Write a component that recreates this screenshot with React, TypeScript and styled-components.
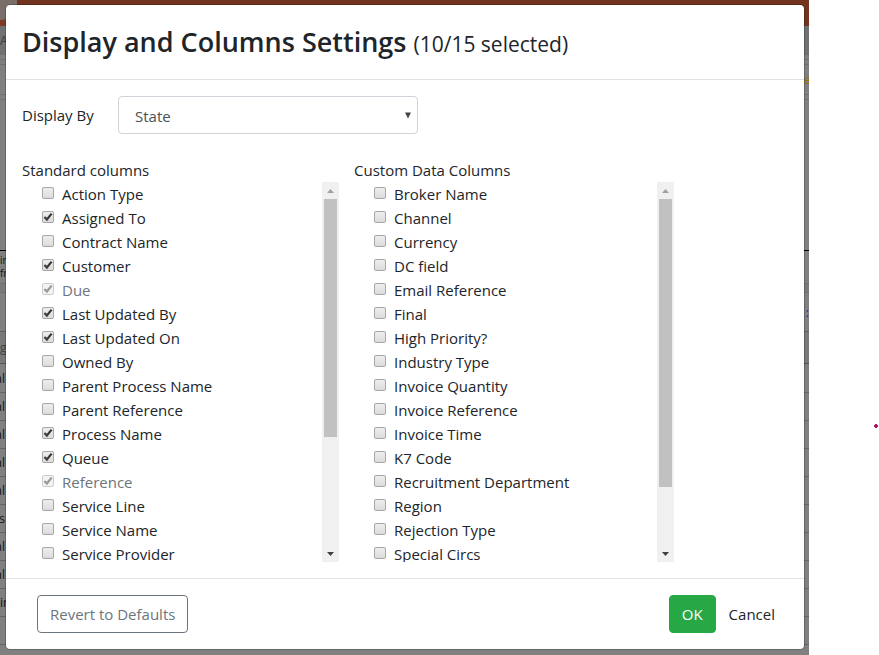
import React, { useState } from "react";
import styled, { createGlobalStyle } from "styled-components";

const GlobalStyle = createGlobalStyle`
  *, *::before, *::after { box-sizing: border-box; }
  html, body, #root { height: 100%; }
  body {
    margin: 0;
    background: #fff;
    color: #212529;
    font-family: "Segoe UI", "Open Sans", "Noto Sans", sans-serif;
    font-size: 15px;
    line-height: 24px;
  }
  button, input, select { font: inherit; color: inherit; }
`;

const Page = styled.div`
  display: flex;
  min-height: 100%;
`;

const AppArea = styled.div`
  position: relative;
  flex: 1;
  display: flex;
  flex-direction: column;
  background: #808080;
  overflow: hidden;
`;

const Gutter = styled.aside`
  display: flex;
  align-items: flex-start;
  justify-content: flex-end;
  width: 70px;
  padding: 424px 1px 0 0;
`;

const Banner = styled.div`
  height: 26px;
  background: #723421;
`;

const BackRow = styled.div<{ $h: number; $line?: string; $bg?: string; $tone?: string }>`
  display: flex;
  align-items: center;
  justify-content: space-between;
  height: ${(p) => p.$h}px;
  flex: none;
  background: ${(p) => p.$bg ?? "transparent"};
  border-bottom: ${(p) => (p.$line ? `1px solid ${p.$line}` : "0")};
  color: ${(p) => p.$tone ?? "#111"};
  font-size: 12px;
  line-height: 13px;
`;

const Sliver = styled.span<{ $end?: boolean; $size?: number }>`
  display: flex;
  flex-direction: column;
  align-items: ${(p) => (p.$end ? "flex-end" : "flex-start")};
  width: 5px;
  font-size: ${(p) => p.$size ?? 12}px;
`;

const Dialog = styled.form`
  position: absolute;
  top: 5px;
  left: 6px;
  right: 5px;
  display: flex;
  flex-direction: column;
  background: #fff;
  border-radius: 4px;
  box-shadow: 0 0 0 1px rgba(0, 0, 0, 0.2);
`;

const Header = styled.header`
  padding: 18px 16px 16px;
  border-bottom: 1px solid #dee2e6;
`;

const Title = styled.h2`
  margin: 0;
  font-size: 27px;
  font-weight: 600;
  line-height: 38px;
`;

const Count = styled.small`
  font-size: 21px;
  font-weight: 400;
`;

const Body = styled.div`
  padding: 16px;
`;

const Field = styled.div`
  display: flex;
  align-items: center;
  margin-bottom: 24px;
`;

const FieldLabel = styled.label`
  width: 96px;
`;

const SelectBox = styled.div`
  position: relative;
  width: 300px;
  svg {
    position: absolute;
    right: 7px;
    top: 16px;
    pointer-events: none;
  }
`;

const Select = styled.select`
  appearance: none;
  display: block;
  width: 100%;
  height: 38px;
  padding: 2px 16px 0;
  border: 1px solid #ced4da;
  border-radius: 4px;
  background: #fff;
  color: #495057;
`;

const Columns = styled.div`
  display: grid;
  grid-template-columns: 317px 320px;
  gap: 15px;
`;

const Group = styled.fieldset`
  min-width: 0;
  margin: 0;
  padding: 0;
  border: 0;
`;

const Legend = styled.legend`
  display: block;
  padding: 0;
  height: 24px;
`;

const ListFrame = styled.div`
  display: flex;
  height: 380px;
`;

const List = styled.ul`
  flex: 1;
  margin: 0;
  padding: 0 0 0 20px;
  list-style: none;
  overflow-y: auto;
  scrollbar-width: none;
`;

const Option = styled.label<{ $muted?: boolean }>`
  display: flex;
  align-items: flex-start;
  gap: 8px;
  height: 24px;
  color: ${(p) => (p.$muted ? "#6c757d" : "inherit")};
`;

const CheckHolder = styled.span`
  position: relative;
  width: 12px;
  height: 12px;
  margin-top: 5px;
  svg {
    position: absolute;
    left: 0;
    top: 0;
    pointer-events: none;
  }
`;

const Checkbox = styled.input`
  appearance: none;
  display: block;
  width: 12px;
  height: 12px;
  margin: 0;
  border: 1px solid #a6a6a6;
  border-radius: 2px;
  background: linear-gradient(#eeeeee, #dcdcdc);
  &:disabled {
    border-color: #cecece;
    background: #f3f3f3;
  }
`;

const Bar = styled.div`
  display: flex;
  flex-direction: column;
  width: 17px;
  background: #f0f0f0;
`;

const BarButton = styled.button`
  display: grid;
  place-items: center;
  height: 17px;
  padding: 0;
  border: 0;
  background: none;
`;

const Track = styled.div`
  flex: 1;
  padding: 0 2px;
`;

const Thumb = styled.div<{ $h: number }>`
  height: ${(p) => p.$h}px;
  background: #c1c1c1;
`;

const Footer = styled.footer`
  display: flex;
  align-items: center;
  padding: 16px 16px 16px 31px;
  border-top: 1px solid #dee2e6;
`;

const Button = styled.button<{ $kind: "outline" | "primary" | "plain" }>`
  height: 38px;
  padding: 0 12px;
  border-radius: 4px;
  border: 1px solid
    ${(p) => ({ outline: "#6c757d", primary: "#28a745", plain: "transparent" })[p.$kind]};
  background: ${(p) => (p.$kind === "primary" ? "#28a745" : "transparent")};
  color: ${(p) => ({ outline: "#6c757d", primary: "#fff", plain: "#212529" })[p.$kind]};
`;

const Spacer = styled.span`
  flex: 1;
`;

type Item = { name: string; checked?: boolean; locked?: boolean };

const standard: Item[] = [
  { name: "Action Type" },
  { name: "Assigned To", checked: true },
  { name: "Contract Name" },
  { name: "Customer", checked: true },
  { name: "Due", checked: true, locked: true },
  { name: "Last Updated By", checked: true },
  { name: "Last Updated On", checked: true },
  { name: "Owned By" },
  { name: "Parent Process Name" },
  { name: "Parent Reference" },
  { name: "Process Name", checked: true },
  { name: "Queue", checked: true },
  { name: "Reference", checked: true, locked: true },
  { name: "Service Line" },
  { name: "Service Name" },
  { name: "Service Provider" },
];

const custom: Item[] = [
  "Broker Name",
  "Channel",
  "Currency",
  "DC field",
  "Email Reference",
  "Final",
  "High Priority?",
  "Industry Type",
  "Invoice Quantity",
  "Invoice Reference",
  "Invoice Time",
  "K7 Code",
  "Recruitment Department",
  "Region",
  "Rejection Type",
  "Special Circs",
].map((name) => ({ name }));

function OptionRow({ item }: { item: Item }) {
  const [checked, setChecked] = useState(!!item.checked);
  return (
    <li>
      <Option $muted={item.locked}>
        <CheckHolder>
          <Checkbox
            type="checkbox"
            checked={checked}
            disabled={item.locked}
            onChange={(e) => setChecked(e.target.checked)}
          />
          {checked && (
            <svg width="12" height="12" viewBox="0 0 12 12" aria-hidden="true">
              <path
                d="M2.4 6 L4.9 8.5 L9.6 2.6"
                fill="none"
                stroke={item.locked ? "#999" : "#3c3c3c"}
                strokeWidth="2.3"
              />
            </svg>
          )}
        </CheckHolder>
        {item.name}
      </Option>
    </li>
  );
}

function ColumnGroup({ title, items, thumb }: { title: string; items: Item[]; thumb: number }) {
  return (
    <Group>
      <Legend>{title}</Legend>
      <ListFrame>
        <List>
          {items.map((item) => (
            <OptionRow key={item.name} item={item} />
          ))}
        </List>
        <Bar>
          <BarButton type="button" aria-label={`Scroll ${title} up`}>
            <svg width="7" height="4" viewBox="0 0 7 4">
              <path d="M0 4 L3.5 0 L7 4 Z" fill="#a0a0a0" />
            </svg>
          </BarButton>
          <Track>
            <Thumb $h={thumb} />
          </Track>
          <BarButton type="button" aria-label={`Scroll ${title} down`}>
            <svg width="7" height="4" viewBox="0 0 7 4">
              <path d="M0 0 L3.5 4 L7 0 Z" fill="#404040" />
            </svg>
          </BarButton>
        </Bar>
      </ListFrame>
    </Group>
  );
}

const backgroundRows = ["al", "al", "al", "al", "al", "es", "al", "al", "in", ""];

function BackgroundPage() {
  return (
    <div aria-hidden="true">
      <Banner>
        <svg width="17" height="26" viewBox="0 0 17 26">
          <rect width="17" height="26" fill="#7b6d69" />
          <path d="M0 20 C8 20 12 17 17 13 V26 H0 Z" fill="#7f3a25" />
        </svg>
      </Banner>
      <BackRow $h={29} $bg="#707172" $tone="#3f3f3f">
        <Sliver>A</Sliver>
      </BackRow>
      <BackRow $h={5} $line="#6f6f6f" />
      <BackRow $h={5} $line="#6f6f6f" />
      <BackRow $h={30} $line="#6f6f6f" $tone="#9a6f00">
        <Sliver />
        <Sliver>e</Sliver>
      </BackRow>
      <BackRow $h={5} $line="#6f6f6f" />
      <BackRow $h={151} $line="#000" />
      <BackRow $h={33} $line="#6f6f6f">
        <Sliver $size={10}>
          <span>in</span>
          <span>fr</span>
        </Sliver>
      </BackRow>
      <BackRow $h={9} $bg="#787a7c" $line="#6f6f6f" />
      <BackRow $h={39} $line="#5f5f5f" $tone="#22229a">
        <Sliver />
        <Sliver $end>:</Sliver>
      </BackRow>
      <BackRow $h={32} $line="#555" $bg="#797979" $tone="#444">
        <Sliver>gr</Sliver>
      </BackRow>
      {backgroundRows.map((text, i) => (
        <BackRow key={i} $h={i === 0 ? 29 : 28} $line="#646464">
          <Sliver $end={text !== "in"}>{text}</Sliver>
        </BackRow>
      ))}
    </div>
  );
}

export default function App() {
  return (
    <>
      <GlobalStyle />
      <Page>
        <AppArea>
          <BackgroundPage />
          <Dialog
            role="dialog"
            aria-labelledby="dialog-title"
            onSubmit={(e) => e.preventDefault()}
          >
            <Header>
              <Title id="dialog-title">
                Display and Columns Settings <Count>(10/15 selected)</Count>
              </Title>
            </Header>
            <Body>
              <Field>
                <FieldLabel htmlFor="display-by">Display By</FieldLabel>
                <SelectBox>
                  <Select id="display-by" defaultValue="State">
                    <option>State</option>
                  </Select>
                  <svg width="6" height="7" viewBox="0 0 6 7" aria-hidden="true">
                    <path d="M0 0.5 H6 L3 6.5 Z" fill="#40464c" />
                  </svg>
                </SelectBox>
              </Field>
              <Columns>
                <ColumnGroup title="Standard columns" items={standard} thumb={238} />
                <ColumnGroup title="Custom Data Columns" items={custom} thumb={288} />
              </Columns>
            </Body>
            <Footer>
              <Button type="button" $kind="outline">
                Revert to Defaults
              </Button>
              <Spacer />
              <Button type="submit" $kind="primary">
                OK
              </Button>
              <Button type="button" $kind="plain">
                Cancel
              </Button>
            </Footer>
          </Dialog>
        </AppArea>
        <Gutter>
          <svg width="4" height="4" viewBox="0 0 4 4" aria-hidden="true">
            <path d="M1 0 H3 V1 H4 V3 H3 V4 H1 V3 H0 V1 H1 Z" fill="#b5125f" />
          </svg>
        </Gutter>
      </Page>
    </>
  );
}
